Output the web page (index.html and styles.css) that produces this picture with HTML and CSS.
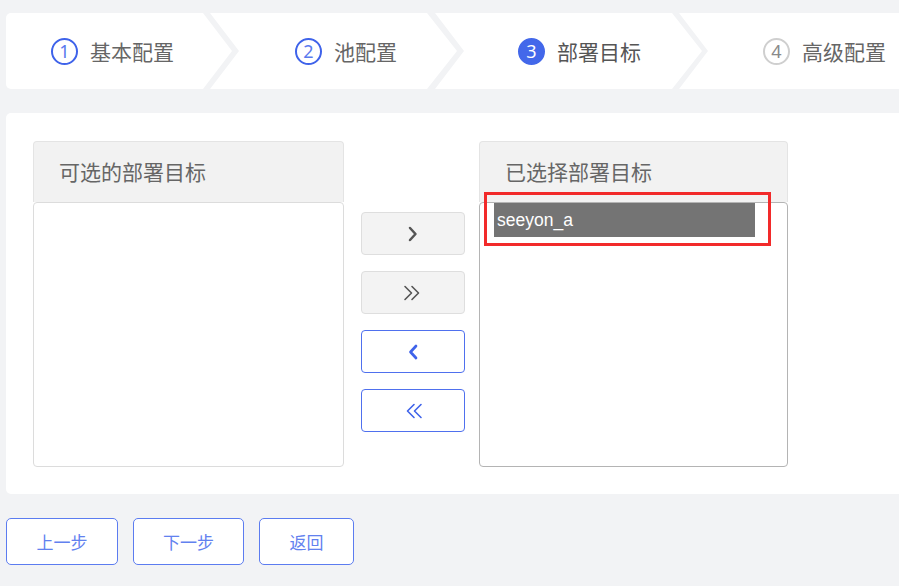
FILE: index.html
```html
<!DOCTYPE html>
<html lang="zh-CN">
<head>
<meta charset="utf-8">
<title>部署目标</title>
<link rel="stylesheet" href="styles.css">
</head>
<body>
<div class="page">
  <div class="steps">
    <div class="step step1"><span class="num">1</span><span class="label">基本配置</span></div>
    <div class="step step2"><span class="num">2</span><span class="label">池配置</span></div>
    <div class="step step3 active"><span class="num">3</span><span class="label">部署目标</span></div>
    <div class="step step4 todo"><span class="num">4</span><span class="label">高级配置</span></div>
  </div>

  <div class="panel">
    <div class="col">
      <div class="col-head">可选的部署目标</div>
      <div class="list"></div>
    </div>
    <div class="mid">
      <button class="mv gray" type="button">
        <svg width="14" height="18" viewBox="0 0 14 18"><polyline points="4,3 9.5,9 4,15" fill="none" stroke="#555" stroke-width="2.5" stroke-linecap="round" stroke-linejoin="round"/></svg>
      </button>
      <button class="mv gray" type="button">
        <svg width="22" height="18" viewBox="0 0 22 18"><polyline points="3,2.5 9.5,9 3,15.5" fill="none" stroke="#555" stroke-width="1.6" stroke-linecap="round" stroke-linejoin="round"/><polyline points="10,2.5 16.5,9 10,15.5" fill="none" stroke="#555" stroke-width="1.6" stroke-linecap="round" stroke-linejoin="round"/></svg>
      </button>
      <button class="mv blue" type="button">
        <svg width="14" height="18" viewBox="0 0 14 18"><polyline points="10,3 4.5,9 10,15" fill="none" stroke="#3f63ea" stroke-width="2.7" stroke-linecap="round" stroke-linejoin="round"/></svg>
      </button>
      <button class="mv blue" type="button">
        <svg width="22" height="18" viewBox="0 0 22 18"><polyline points="12,2.5 5.5,9 12,15.5" fill="none" stroke="#3f63ea" stroke-width="1.6" stroke-linecap="round" stroke-linejoin="round"/><polyline points="19,2.5 12.5,9 19,15.5" fill="none" stroke="#3f63ea" stroke-width="1.6" stroke-linecap="round" stroke-linejoin="round"/></svg>
      </button>
    </div>
    <div class="col col-right">
      <div class="col-head">已选择部署目标</div>
      <div class="list list-sel">
        <div class="item">seeyon_a</div>
        <div class="mark"></div>
      </div>
    </div>
  </div>

  <div class="actions">
    <button class="act w1" type="button">上一步</button>
    <button class="act w2" type="button">下一步</button>
    <button class="act w3" type="button">返回</button>
  </div>
</div>
</body>
</html>
```

FILE: styles.css
```css
html, body {
  margin: 0;
  padding: 0;
  background: #f2f3f5;
  overflow: hidden;
  font-family: "Noto Sans CJK SC", "Noto Sans", sans-serif;
}

.page {
  width: 899px;
  height: 586px;
  overflow: hidden;
}

/* ---------- steps ---------- */
.steps {
  display: flex;
  height: 76px;
  margin: 13px 0 0 6px;
}

.step {
  flex: none;
  box-sizing: border-box;
  height: 76px;
  background: #fff;
  display: flex;
  align-items: center;
}

.step1 {
  width: 226px;
  padding-left: 45px;
  border-radius: 5px 0 0 5px;
  clip-path: polygon(0 0, 197px 0, 226px 38px, 197px 76px, 0 76px);
}

.step2 {
  width: 247px;
  margin-left: -22px;
  padding-left: 85px;
  clip-path: polygon(0 0, 217px 0, 247px 38px, 217px 76px, 0 76px, 29px 38px);
}

.step3 {
  width: 267px;
  margin-left: -22px;
  padding-left: 83px;
  clip-path: polygon(0 0, 237px 0, 267px 38px, 237px 76px, 0 76px, 29px 38px);
}

.step4 {
  width: 260px;
  margin-left: -23px;
  padding-left: 84px;
  clip-path: polygon(0 0, 100% 0, 100% 76px, 0 76px, 29px 38px);
}

.num {
  box-sizing: border-box;
  width: 27px;
  height: 27px;
  border: 2px solid #3f63ea;
  border-radius: 50%;
  color: #5a7aee;
  font-size: 18px;
  line-height: 23px;
  text-align: center;
  margin-right: 12px;
  font-family: "Noto Sans", sans-serif;
}

.step.active .num {
  background: #4368ea;
  border-color: #4368ea;
  color: #fff;
}

.step.todo .num {
  border-color: #cfcfcf;
  color: #8a8a8a;
}

.label {
  font-size: 21px;
  color: #666;
  line-height: 1;
}

.step.active .label {
  color: #555;
}

/* ---------- panel ---------- */
.panel {
  display: flex;
  box-sizing: border-box;
  height: 381px;
  margin: 24px 0 0 6px;
  padding: 28px 0 0 27px;
  background: #fff;
  border-radius: 5px 0 0 5px;
}

.col {
  width: 311px;
  flex: none;
}

.col-right {
  width: 309px;
  margin-left: 14px;
}

.col-head {
  box-sizing: border-box;
  height: 61px;
  padding-left: 25px;
  background: #f2f2f2;
  border: 1px solid #e4e4e4;
  border-bottom: none;
  border-radius: 4px 4px 0 0;
  font-size: 21px;
  line-height: 58px;
  color: #666;
}

.list {
  position: relative;
  box-sizing: border-box;
  height: 265px;
  border: 1px solid #dcdcdc;
  border-radius: 4px;
  background: #fff;
}

.list-sel {
  border-color: #b4b4b4;
  padding-left: 14px;
}

.item {
  width: 261px;
  height: 34px;
  box-sizing: border-box;
  padding-left: 3px;
  background: #747474;
  color: #fff;
  font-family: "Liberation Sans", Arial, sans-serif;
  font-size: 17.5px;
  line-height: 34px;
}

.mark {
  position: absolute;
  left: 4px;
  top: -11px;
  width: 287px;
  height: 54px;
  box-sizing: border-box;
  border: 3px solid #f22a2a;
}

/* ---------- middle buttons ---------- */
.mid {
  flex: none;
  width: 104px;
  margin-left: 17px;
  padding-top: 71px;
  display: flex;
  flex-direction: column;
  gap: 16px;
}

.mv {
  box-sizing: border-box;
  width: 104px;
  height: 43px;
  border-radius: 4px;
  display: flex;
  align-items: center;
  justify-content: center;
  padding: 0;
  cursor: pointer;
}

.mv.gray {
  background: #f3f3f3;
  border: 1px solid #dedede;
}

.mv.blue {
  background: #fff;
  border: 1.5px solid #4f70ee;
}

/* ---------- bottom actions ---------- */
.actions {
  display: flex;
  gap: 15px;
  margin: 24px 0 0 6px;
}

.act {
  box-sizing: border-box;
  height: 47px;
  background: #fff;
  border: 1.5px solid #5c7cf0;
  border-radius: 5px;
  color: #6281ef;
  font-family: "Noto Sans CJK SC", sans-serif;
  font-size: 17px;
  padding: 0;
  cursor: pointer;
}

.w1 { width: 112px; }
.w2 { width: 111px; }
.w3 { width: 95px; }
```
